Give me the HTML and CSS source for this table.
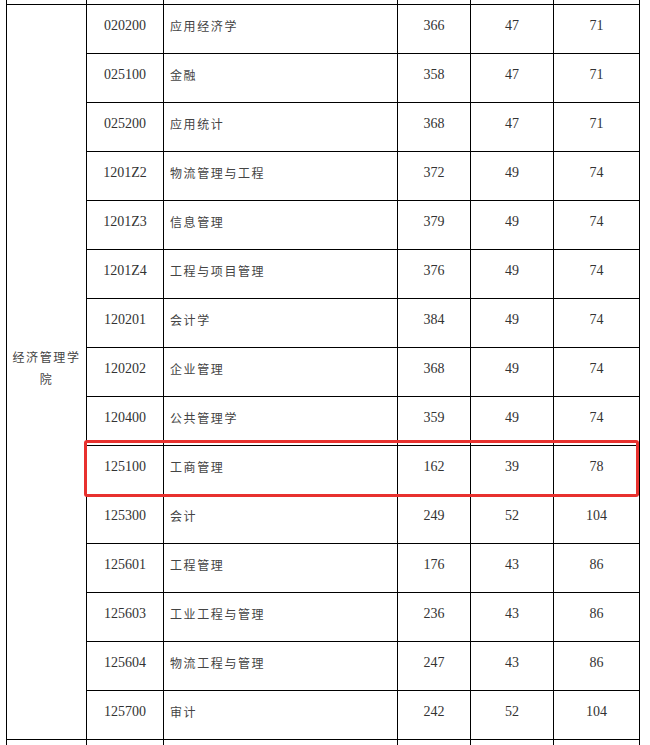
FILE: index.html
```html
<!DOCTYPE html>
<html lang="zh">
<head>
<meta charset="utf-8">
<title>经济管理学院</title>
<link rel="stylesheet" href="styles.css">
</head>
<body>
<div class="wrap">
<table class="grid">
<colgroup>
<col class="c1"><col class="c2"><col class="c3"><col class="c4"><col class="c5"><col class="c6">
</colgroup>
<tbody>
<tr class="cut"><td></td><td></td><td></td><td></td><td></td><td></td></tr>
<tr><td class="dept" rowspan="15">经济管理学院</td><td class="code">020200</td><td class="name">应用经济学</td><td class="num">366</td><td class="num">47</td><td class="num">71</td></tr>
<tr><td class="code">025100</td><td class="name">金融</td><td class="num">358</td><td class="num">47</td><td class="num">71</td></tr>
<tr><td class="code">025200</td><td class="name">应用统计</td><td class="num">368</td><td class="num">47</td><td class="num">71</td></tr>
<tr><td class="code">1201Z2</td><td class="name">物流管理与工程</td><td class="num">372</td><td class="num">49</td><td class="num">74</td></tr>
<tr><td class="code">1201Z3</td><td class="name">信息管理</td><td class="num">379</td><td class="num">49</td><td class="num">74</td></tr>
<tr><td class="code">1201Z4</td><td class="name">工程与项目管理</td><td class="num">376</td><td class="num">49</td><td class="num">74</td></tr>
<tr><td class="code">120201</td><td class="name">会计学</td><td class="num">384</td><td class="num">49</td><td class="num">74</td></tr>
<tr><td class="code">120202</td><td class="name">企业管理</td><td class="num">368</td><td class="num">49</td><td class="num">74</td></tr>
<tr><td class="code">120400</td><td class="name">公共管理学</td><td class="num">359</td><td class="num">49</td><td class="num">74</td></tr>
<tr><td class="code">125100</td><td class="name">工商管理</td><td class="num">162</td><td class="num">39</td><td class="num">78</td></tr>
<tr><td class="code">125300</td><td class="name">会计</td><td class="num">249</td><td class="num">52</td><td class="num">104</td></tr>
<tr><td class="code">125601</td><td class="name">工程管理</td><td class="num">176</td><td class="num">43</td><td class="num">86</td></tr>
<tr><td class="code">125603</td><td class="name">工业工程与管理</td><td class="num">236</td><td class="num">43</td><td class="num">86</td></tr>
<tr><td class="code">125604</td><td class="name">物流工程与管理</td><td class="num">247</td><td class="num">43</td><td class="num">86</td></tr>
<tr><td class="code">125700</td><td class="name">审计</td><td class="num">242</td><td class="num">52</td><td class="num">104</td></tr>
<tr><td></td><td></td><td></td><td></td><td></td><td></td></tr>
</tbody>
</table>
<div class="highlight"></div>
</div>
</body>
</html>
```
FILE: styles.css
```css
html, body {
  margin: 0;
  padding: 0;
  background: #ffffff;
}
body {
  font-family: "Liberation Serif", "Noto Sans CJK SC", serif;
  color: #333333;
}
.wrap {
  position: relative;
  padding-left: 6px;
}
.grid {
  border-collapse: collapse;
  table-layout: fixed;
  width: 633px;
}
.c1 { width: 80px; }
.c2 { width: 77px; }
.c3 { width: 234px; }
.c4 { width: 73px; }
.c5 { width: 83px; }
.c6 { width: 86px; }
.grid td {
  border: 1px solid #000000;
  height: 49px;
  padding: 11px 0 0 0;
  vertical-align: top;
  box-sizing: border-box;
  line-height: 20px;
  font-size: 14px;
  text-align: center;
}
.grid tr.cut td {
  border-top: 0;
  height: 4px;
  padding: 0;
}
.grid td.dept {
  vertical-align: middle;
  padding: 0 4px 8px 4px;
  font-family: "Noto Sans CJK SC", sans-serif;
  font-size: 12px;
  letter-spacing: 1.6px;
  line-height: 22px;
  color: #444444;
}
.grid td.name {
  text-align: left;
  padding-left: 6px;
  font-family: "Noto Sans CJK SC", sans-serif;
  font-size: 12px;
  letter-spacing: 1.6px;
  color: #444444;
}
.highlight {
  position: absolute;
  left: 84px;
  top: 440px;
  width: 555px;
  height: 57px;
  box-sizing: border-box;
  border: 3px solid #e8312e;
  border-radius: 3px;
}
```
